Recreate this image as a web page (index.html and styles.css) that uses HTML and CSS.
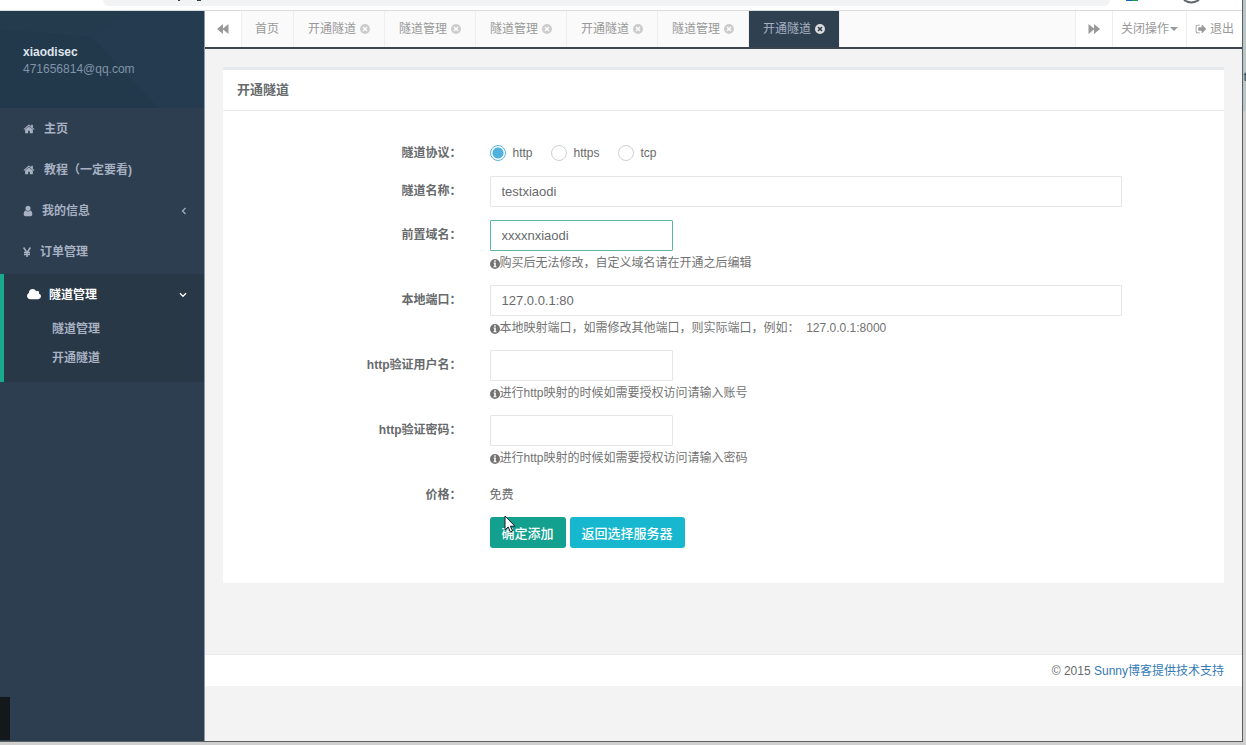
FILE: index.html
```
<!DOCTYPE html>
<html lang="zh-CN">
<head>
<meta charset="utf-8">
<title>开通隧道</title>
<link rel="stylesheet" href="styles.css">
</head>
<body>
<svg class="defs" aria-hidden="true">
  <symbol id="home" viewBox="0 0 1792 1792"><path d="M1472 992v480q0 26-19 45t-45 19h-384v-384h-256v384h-384q-26 0-45-19t-19-45v-480q0-1 .5-3t.5-3l575-474 575 474q1 2 1 6zm223-69l-62 74q-8 9-21 11h-3q-13 0-21-7l-692-577-692 577q-12 8-24 7-13-2-21-11l-62-74q-8-10-7-23.500t11-21.500l719-599q32-26 76-26t76 26l244 204v-195q0-14 9-23t23-9h192q14 0 23 9t9 23v408l219 182q10 8 11 21.500t-7 23.500z"/></symbol>
  <symbol id="user" viewBox="256 0 1280 1792"><path d="M1536 1399q0 109-62.500 187t-150.500 78h-854q-88 0-150.500-78t-62.500-187q0-85 8.500-160.500t31.500-152 58.500-131 94-89 134.500-34.500q131 128 313 128t313-128q76 0 134.500 34.500t94 89 58.500 131 31.500 152 8.500 160.500zm-256-887q0 159-112.500 271.500t-271.500 112.500-271.500-112.500-112.500-271.500 112.500-271.500 271.500-112.500 271.500 112.500 112.500 271.500z"/></symbol>
  <symbol id="cloud" viewBox="64 0 1920 1792"><path d="M1984 1152q0 159-112.500 271.500t-271.500 112.500h-1088q-185 0-316.500-131.500t-131.500-316.500q0-132 71-241.500t187-163.500q-2-28-2-43 0-212 150-362t362-150q158 0 286.500 88t187.500 230q70-62 166-62 106 0 181 75t75 181q0 75-41 138 129 30 213 134.500t84 239.500z"/></symbol>
  <symbol id="signout" viewBox="64 0 1600 1792"><path d="M704 1440q0 4 1 20t.5 26.500-3 23.500-10 19.500-20.500 6.500h-320q-119 0-203.500-84.500t-84.500-203.500v-704q0-119 84.500-203.500t203.500-84.500h320q13 0 22.500 9.500t9.500 22.500q0 4 1 20t.5 26.500-3 23.500-10 19.500-20.500 6.500h-320q-66 0-113 47t-47 113v704q0 66 47 113t113 47h312l11.500 1 11.500 3 8 5.500 7 9 2 13.500zm928-544q0 26-19 45l-544 544q-19 19-45 19t-45-19-19-45v-288h-448q-26 0-45-19t-19-45v-384q0-26 19-45t45-19h448v-288q0-26 19-45t45-19 45 19l544 544q19 19 19 45z"/></symbol>
  <symbol id="yen" viewBox="0 0 8 12"><path d="M.6 1.500 4 6.600 7.400 1.500M1 6.500h6M1 8.600h6M4 6v5" fill="none" stroke="currentColor" stroke-width="1.500"/></symbol>
  <symbol id="close" viewBox="0 0 10 10"><path fill-rule="evenodd" d="M5 0a5 5 0 1 1 0 10A5 5 0 0 1 5 0ZM3.600 2.500 2.500 3.600 3.900 5 2.500 6.400 3.600 7.500 5 6.100 6.400 7.500 7.500 6.400 6.100 5 7.500 3.600 6.400 2.500 5 3.900Z"/></symbol>
  <symbol id="info" viewBox="0 0 10 10"><path fill-rule="evenodd" d="M5 0a5 5 0 1 1 0 10A5 5 0 0 1 5 0ZM4.200 1.300v1.400h1.600V1.300ZM3.500 3.500v1h.7v2.700h-.7v1h3v-1h-.7V3.500Z"/></symbol>
  <symbol id="back" viewBox="0 0 12 10"><path d="M6 0v4.500L11.500 0v10L6 5.500V10L0 5Z"/></symbol>
  <symbol id="forward" viewBox="0 0 12 10"><path d="M6 0v4.500L.5 0v10L6 5.500V10l6-5Z"/></symbol>
  <symbol id="left" viewBox="0 0 6 8"><path d="M4.500 1 1.500 4l3 3" fill="none" stroke="currentColor" stroke-width="1.200"/></symbol>
  <symbol id="down" viewBox="0 0 8 6"><path d="M1 1.300 4 4.300l3-3" fill="none" stroke="currentColor" stroke-width="1.400"/></symbol>
</svg>

<div class="desktop">
  <div class="window">
    <div class="chrome">
      <div class="address"></div>
      <svg class="url-marks" viewBox="0 0 30 2" aria-hidden="true"><path fill="#3a3d40" d="M0 0h2v1H0zM19 0h4v1h-4z"/></svg>
      <svg class="chrome-marks" viewBox="0 0 80 5" aria-hidden="true"><path fill="#1767b5" d="M2 0h6v1H2z"/><path fill="#1c9c5b" d="M8 0h6v1H8z"/><path d="M60 0q7 5 15 0" fill="none" stroke="#5f6368" stroke-width="2"/></svg>
    </div>
    <div class="app">
      <nav class="sidebar">
        <div class="profile">
          <svg class="profile-art" viewBox="0 0 204 96" preserveAspectRatio="none" aria-hidden="true"><path fill="#22384b" d="M0 18 92 26 158 96H0Z"/><path fill="#263f55" fill-opacity=".4" d="M92 26 130 0h74v96h-46Z"/></svg>
          <strong class="profile-name">xiaodisec</strong>
          <span class="profile-mail">471656814@qq.com</span>
        </div>
        <a class="item" href="#"><svg class="i12"><use href="#home"/></svg>主页</a>
        <a class="item" href="#"><svg class="i12"><use href="#home"/></svg>教程（一定要看)</a>
        <a class="item" href="#"><svg class="i10"><use href="#user"/></svg>我的信息<svg class="arrow arrow-left"><use href="#left"/></svg></a>
        <a class="item" href="#"><svg class="i8"><use href="#yen"/></svg>订单管理</a>
        <div class="group">
          <a class="item current" href="#"><svg class="i14"><use href="#cloud"/></svg>隧道管理<svg class="arrow arrow-down"><use href="#down"/></svg></a>
          <a class="sub" href="#">隧道管理</a>
          <a class="sub" href="#">开通隧道</a>
        </div>
      </nav>
      <main class="main">
        <div class="tabbar">
          <button class="roll roll-left" type="button" aria-label="向左"><svg class="i12"><use href="#back"/></svg></button>
          <div class="tabs">
            <a class="tab" href="#">首页</a>
            <a class="tab" href="#">开通隧道<svg class="i10"><use href="#close"/></svg></a>
            <a class="tab" href="#">隧道管理<svg class="i10"><use href="#close"/></svg></a>
            <a class="tab" href="#">隧道管理<svg class="i10"><use href="#close"/></svg></a>
            <a class="tab" href="#">开通隧道<svg class="i10"><use href="#close"/></svg></a>
            <a class="tab" href="#">隧道管理<svg class="i10"><use href="#close"/></svg></a>
            <a class="tab active" href="#">开通隧道<svg class="i10"><use href="#close"/></svg></a>
          </div>
          <button class="roll" type="button" aria-label="向右"><svg class="i12"><use href="#forward"/></svg></button>
          <button class="roll" type="button">关闭操作<span class="caret"></span></button>
          <a class="roll exit" href="#"><svg class="i12"><use href="#signout"/></svg>退出</a>
        </div>
        <div class="content">
          <section class="card">
            <h1 class="card-title">开通隧道</h1>
            <form class="form">
              <div class="row row-radio" role="radiogroup" aria-labelledby="proto">
                <span class="label" id="proto">隧道协议：</span>
                <div class="field radios">
                  <label class="radio"><input type="radio" name="p" checked>http</label>
                  <label class="radio"><input type="radio" name="p">https</label>
                  <label class="radio"><input type="radio" name="p">tcp</label>
                </div>
              </div>
              <div class="row">
                <label class="label" for="name">隧道名称：</label>
                <div class="field"><input class="input" id="name" type="text" value="testxiaodi"></div>
              </div>
              <div class="row">
                <label class="label" for="domain">前置域名：</label>
                <div class="field"><input class="input short focused" id="domain" type="text" value="xxxxnxiaodi">
                  <p class="help"><svg class="i10"><use href="#info"/></svg>购买后无法修改，自定义域名请在开通之后编辑</p></div>
              </div>
              <div class="row">
                <label class="label" for="port">本地端口：</label>
                <div class="field"><input class="input" id="port" type="text" value="127.0.0.1:80">
                  <p class="help"><svg class="i10"><use href="#info"/></svg>本地映射端口，如需修改其他端口，则实际端口，例如：&nbsp; 127.0.0.1:8000</p></div>
              </div>
              <div class="row">
                <label class="label" for="usr">http验证用户名：</label>
                <div class="field"><input class="input short" id="usr" type="text">
                  <p class="help"><svg class="i10"><use href="#info"/></svg>进行http映射的时候如需要授权访问请输入账号</p></div>
              </div>
              <div class="row">
                <label class="label" for="pwd">http验证密码：</label>
                <div class="field"><input class="input short" id="pwd" type="text">
                  <p class="help"><svg class="i10"><use href="#info"/></svg>进行http映射的时候如需要授权访问请输入密码</p></div>
              </div>
              <div class="row">
                <span class="label">价格：</span>
                <div class="field price">免费</div>
              </div>
              <div class="row">
                <span></span>
                <div class="field actions">
                  <button class="btn primary" type="button">确定添加</button>
                  <button class="btn info" type="button">返回选择服务器</button>
                  <svg class="cursor" viewBox="0 0 12 18" aria-hidden="true"><path d="M1 1v14l3.200-3 2.200 5 2.200-1-2.200-4.800H11Z" fill="#fff" stroke="#111c2b"/></svg>
                </div>
              </div>
            </form>
          </section>
        </div>
        <footer class="footer">© 2015 <a href="#">Sunny博客提供技术支持</a></footer>
      </main>
    </div>
  </div>
  <div class="behind">t</div>
  <div class="block"></div>
</div>
</body>
</html>
```
FILE: styles.css
```
* { box-sizing: border-box; }
body {
  margin: 0;
  font: 12px/18px "Liberation Sans", "Noto Sans CJK SC", sans-serif;
  color: #676a6c;
}
a { text-decoration: none; }
button, input { font-family: inherit; color: inherit; margin: 0; }
svg { fill: currentColor; flex: none; }
.defs { position: absolute; width: 0; height: 0; }
.i8 { width: 8px; height: 12px; }
.i10 { width: 10px; height: 12px; }
.i12 { width: 12px; height: 12px; }
.i14 { width: 14px; height: 13px; }

.desktop {
  position: relative;
  min-height: 100vh;
  display: flex;
  padding: 0 3px 3px 0;
  background: linear-gradient(#b9c6c8 0 110px, #cfcfcf 112px);
  overflow: hidden;
}
.window {
  flex: 1;
  display: flex;
  flex-direction: column;
  border: solid #5c5f62;
  border-width: 0 1px 1px 0;
  background: #f3f3f4;
}
.behind { position: absolute; top: 68px; right: -1px; color: #1d4a60; font-size: 13px; }
.block { position: absolute; left: 0; bottom: 5px; width: 10px; height: 43px; background: #14181a; }

.chrome {
  position: relative;
  height: 11px;
  padding: 0 132px 0 103px;
  background: #fff;
  border-bottom: 1px solid #d9dcde;
}
.address { height: 6px; background: #f1f3f4; border-radius: 0 0 8px 8px; }
.url-marks { position: absolute; top: 0; left: 178px; width: 30px; height: 2px; }
.chrome-marks { position: absolute; top: 0; right: 38px; width: 80px; height: 5px; }

.app { flex: 1; display: flex; }
.sidebar {
  width: 205px;
  flex: none;
  background: #2c3e50;
  border-right: 1px solid #8d98a3;
  color: #a7b1c2;
}
.profile {
  position: relative;
  height: 97px;
  padding: 33px 23px 0;
  background: #243a4d;
  display: flex;
  flex-direction: column;
}
.profile-art { position: absolute; inset: 0; width: 100%; height: 100%; }
.profile-name, .profile-mail { position: relative; line-height: 17px; }
.profile-name { color: #dfe4ed; }
.profile-mail { color: #8095a8; }
.item {
  display: flex;
  align-items: center;
  gap: 9px;
  height: 41px;
  padding: 0 17px 0 23px;
  color: #a7b1c2;
  font-weight: 600;
}
.arrow { margin-left: auto; }
.arrow-left { width: 6px; height: 8px; }
.arrow-down { width: 8px; height: 6px; }
.group {
  margin-top: 2px;
  border-left: 4px solid #19aa8d;
  background: #293846;
  padding-bottom: 9px;
}
.current { color: #fff; gap: 8px; }
.sub {
  display: block;
  padding: 0 0 0 48px;
  line-height: 29px;
  color: #a7b1c2;
  font-weight: 600;
}

.main { flex: 1; min-width: 0; display: flex; flex-direction: column; }
.tabbar {
  display: flex;
  height: 38px;
  background: #fafafa;
  border-bottom: 2px solid #3c454d;
}
.tabs { display: flex; flex: 1; min-width: 0; overflow: hidden; }
.tab {
  display: flex;
  align-items: center;
  gap: 4px;
  padding: 0 14px 0 13px;
  border-right: 1px solid #eee;
  color: #999;
  white-space: nowrap;
}
.tab + .tab { padding-left: 14px; }
.tab .i10 { color: #ccc; }
.tab.active { background: #2f4050; color: #a7b1c2; }
.tab.active .i10 { color: #dcdcdc; }
.roll {
  display: flex;
  align-items: center;
  justify-content: center;
  gap: 3px;
  padding: 0 8px;
  min-width: 37px;
  border: 0;
  border-left: 1px solid #eee;
  background: #fff;
  color: #999;
  font-size: 12px;
  line-height: 18px;
  white-space: nowrap;
}
.roll-left { border-left: 0; border-right: 1px solid #eee; }
.caret { border: 4px solid transparent; border-top-color: #999; border-bottom: 0; margin-left: -2px; }

.content { flex: none; padding: 18px 18px 71px; }
.card { background: #fff; border-top: 3px solid #e7eaec; }
.card-title {
  margin: 0;
  padding: 10px 14px 11px;
  border-bottom: 1px solid #e7eaec;
  font-size: 13px;
  line-height: 19px;
  font-weight: 600;
}
.form {
  display: flex;
  flex-direction: column;
  gap: 13px;
  padding: 27px 4px 35px 3px;
}
.row { display: grid; grid-template-columns: 3fr 8fr 1fr; }
.row-radio { min-height: 25px; }
.label { padding: 6px 13px 0 0; text-align: right; font-weight: 700; }
.field { padding: 0 15px; min-width: 0; }
.radios { display: flex; gap: 18px; padding-top: 4px; }
.radio { display: flex; align-items: center; gap: 7px; }
.radio input {
  appearance: none;
  width: 16px;
  height: 16px;
  border: 1px solid #d0d0d0;
  border-radius: 50%;
  background: #fff;
}
.radio input:checked {
  border-color: #59b7de;
  background: radial-gradient(circle, #4fb2de 5px, #fff 6px);
}
.input {
  display: block;
  width: 100%;
  height: 31px;
  padding: 0 11px;
  border: 1px solid #e5e6e7;
  border-radius: 1px;
  background: #fff;
  font-size: 13px;
  outline: 0;
}
.short { width: 183px; }
.focused { border-color: #5bb5a3; }
.help { display: flex; align-items: center; margin: 4px 0 0; line-height: 17px; color: #737373; white-space: pre; }
.price { padding-top: 6px; }
.actions { position: relative; display: flex; gap: 4px; }
.btn {
  height: 31px;
  padding: 0 12px;
  border: 0;
  border-radius: 3px;
  color: #fff;
  font-size: 13px;
  font-weight: 500;
}
.primary { background: #14a08e; }
.info { background: #17b8cf; }
.cursor { position: absolute; left: 29px; top: -2px; width: 12px; height: 18px; }

.footer {
  padding: 7px 18px 6px;
  background: #fff;
  border-top: 1px solid #e7eaec;
  text-align: right;
}
.footer a { color: #337ab7; }
```
